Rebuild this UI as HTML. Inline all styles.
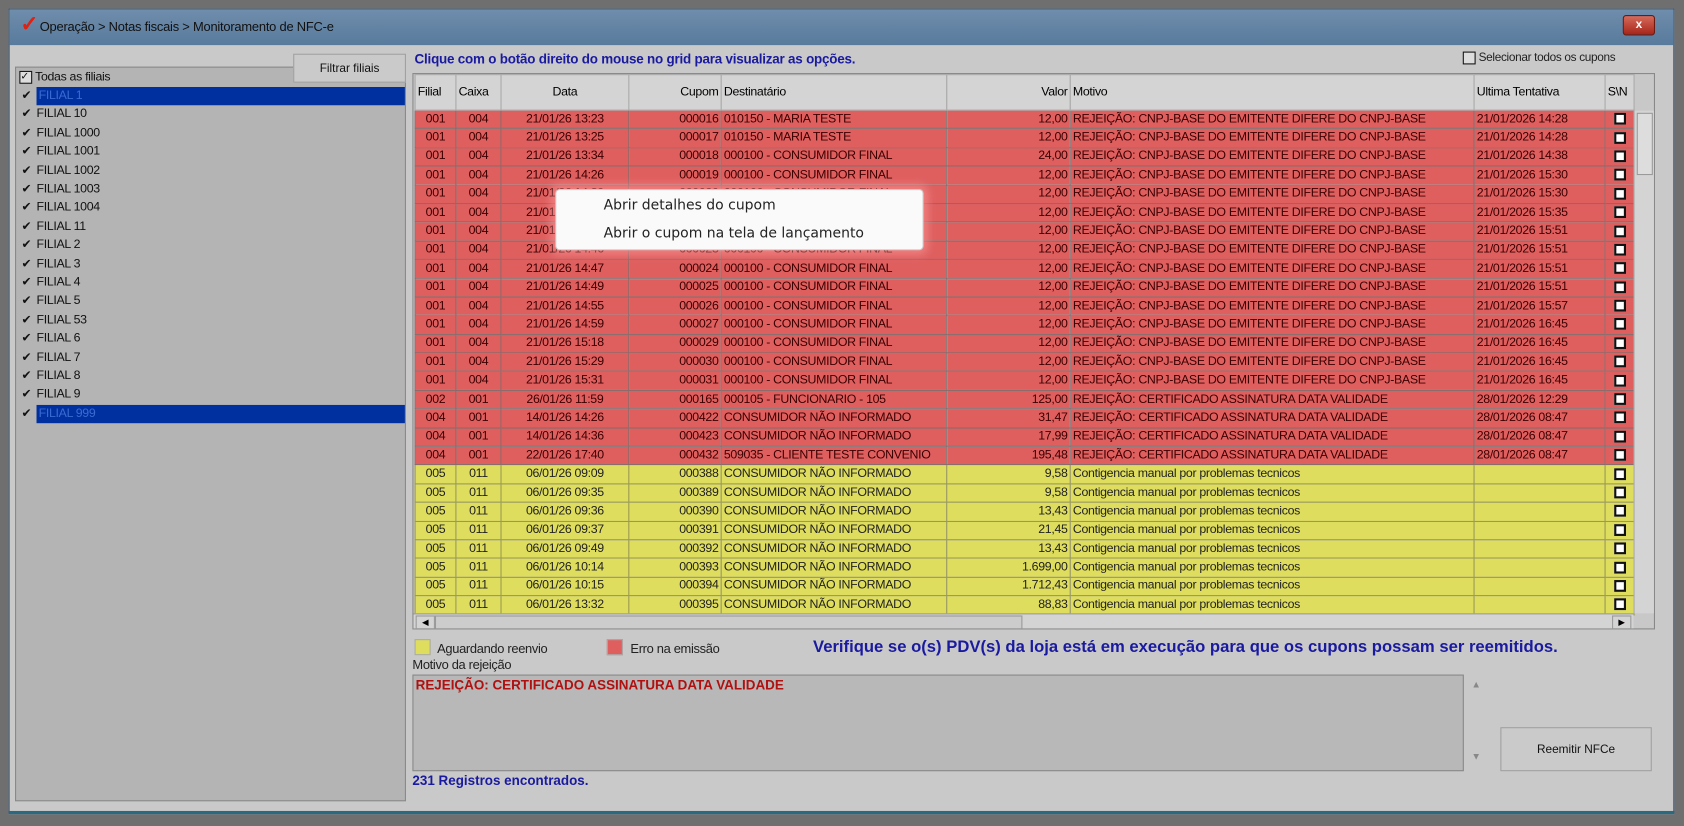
<!DOCTYPE html>
<html><head><meta charset="utf-8"><style>
*{box-sizing:border-box;margin:0;padding:0}
html,body{width:1684px;height:826px;overflow:hidden;background:#6f6f6f;font-family:"Liberation Sans",sans-serif}
#w{position:absolute;left:0;top:0;width:1568px;height:769px;transform:scale(1.07398,1.07412);transform-origin:0 0}
.abs{position:absolute}
#win{left:8px;top:8px;width:1551px;height:750px;background:#c9c9c9;border:1px solid #3a5a78;border-bottom:3px solid #2a6a80}
#tb{left:9px;top:9px;width:1549px;height:33px;background:linear-gradient(#6f8dac,#587a9c);color:#111;font-size:12px;line-height:33px;padding-left:28px;letter-spacing:-0.2px}
#close{left:1511px;top:14px;width:30px;height:19px;background:linear-gradient(#d56a5a,#a8261a);border:1px solid #6a1a10;border-radius:3px;color:#fff;font-size:11px;text-align:center;line-height:17px;font-weight:bold}
#left{left:14px;top:62px;width:364px;height:684px;background:#b4b4b4;border:1px solid #888}
.btn{background:#cacaca;border:1px solid #a0a0a0;font-size:11px;text-align:center;color:#111}
.fi{position:absolute;left:20px;font-size:11.5px;height:17px;line-height:17px;color:#111;width:357px;letter-spacing:-0.3px}
.fi b{font-weight:normal;display:inline-block;width:14px;font-size:11px}
.sel span{background:#0030a0;color:#3a6ad0;display:inline-block;width:343px;padding-left:2px}
#grid{left:384px;top:68px;width:1157px;height:518px;background:#c8c8c8;border:1px solid #888;overflow:hidden}
table{border-collapse:collapse;table-layout:fixed;font-size:11.5px;letter-spacing:-0.3px;position:absolute;left:1px;top:0}
td,th{height:17.4px;border:1px solid #8a6a6a;white-space:nowrap;overflow:hidden;padding:0 2px;font-weight:normal;line-height:15px}
th{height:33px;background:#d4d4d4;border-color:#aaa;text-align:left}
tr.r td{background:#df5f5f;color:#3a0000}
tr.y td{background:#dedd5e;color:#222;border-color:#9a9a50}
td.c{text-align:center}td.rt{text-align:right}
.cb{display:inline-block;width:11px;height:11px;border:2px solid #111;background:#fff;vertical-align:middle}
#menu{left:517px;top:176px;width:343px;height:57px;background:#fafafa;border:1px solid #ccc;border-radius:4px;box-shadow:0 0 8px 4px rgba(255,160,160,.5);font-family:"DejaVu Sans","Liberation Sans",sans-serif;font-size:13px;color:#222}
#menu div{position:absolute;left:44px}
.blue{color:#1a1aa0;font-weight:bold}
</style></head><body><div id="w">
<div id="win" class="abs"></div>
<div id="tb" class="abs"><span style="position:absolute;left:10px;top:-2px;color:#e02010;font-size:20px;font-weight:bold">✓</span>Operação &gt; Notas fiscais &gt; Monitoramento de NFC-e</div>
<div id="close" class="abs">x</div>
<div id="left" class="abs"></div>
<div class="abs btn" style="left:273px;top:50px;width:105px;height:27px;line-height:27px">Filtrar filiais</div>
<div class="fi" style="top:64px;left:18px"><b class="cb" style="width:12px;height:12px;border-width:1px;background:#ddd;font-size:10px;line-height:9px">✓</b> Todas as filiais</div>
<div id="fl"></div>
<div class="abs blue" style="left:386px;top:48px;font-size:12.5px;letter-spacing:-0.2px">Clique com o botão direito do mouse no grid para visualizar as opções.</div>
<div class="abs" style="left:1362px;top:48px;font-size:11px;color:#222;letter-spacing:-0.3px"><span class="cb" style="border-width:1px;width:12px;height:12px;background:#ddd"></span> Selecionar todos os cupons</div>
<div id="grid" class="abs"><table id="t">
<colgroup><col style="width:38px"><col style="width:42px"><col style="width:119px"><col style="width:86px"><col style="width:210px"><col style="width:115px"><col style="width:376px"><col style="width:122px"><col style="width:27px"></colgroup>
<tr><th>Filial</th><th>Caixa</th><th style="text-align:center">Data</th><th style="text-align:right">Cupom</th><th>Destinatário</th><th style="text-align:right">Valor</th><th>Motivo</th><th>Ultima Tentativa</th><th>S\N</th></tr>
</table>
<div class="abs" style="left:1136px;top:34px;width:20px;height:468px;background:#d4d4d4;border-left:1px solid #aaa"><div style="margin:2px;height:58px;border:1px solid #999;background:#ddd"></div></div>
<div class="abs" style="left:0;top:502px;width:1136px;height:16px;background:#d4d4d4;border-top:1px solid #999"><div style="position:absolute;left:2px;top:1px;width:18px;height:13px;border:1px solid #999;font-size:8px;line-height:12px;text-align:center">◀</div><div style="position:absolute;left:20px;top:1px;width:547px;height:13px;border:1px solid #999;background:#ccc"></div><div style="position:absolute;right:2px;top:1px;width:18px;height:13px;border:1px solid #999;font-size:8px;line-height:12px;text-align:center">▶</div></div>
</div>
<div id="menu" class="abs"><div style="top:7px">Abrir detalhes do cupom</div><div style="top:33px">Abrir o cupom na tela de lançamento</div></div>
<div class="abs" style="left:386px;top:595px;width:15px;height:15px;background:#dedd5e;border:1px solid #aaa"></div>
<div class="abs" style="left:407px;top:597px;font-size:12px;color:#222;letter-spacing:-0.3px">Aguardando reenvio</div>
<div class="abs" style="left:565px;top:595px;width:15px;height:15px;background:#df5f5f;border:1px solid #aaa"></div>
<div class="abs" style="left:587px;top:597px;font-size:12px;color:#222;letter-spacing:-0.3px">Erro na emissão</div>
<div class="abs blue" style="left:757px;top:594px;font-size:15.5px">Verifique se o(s) PDV(s) da loja está em execução para que os cupons possam ser reemitidos.</div>
<div class="abs" style="left:384px;top:612px;font-size:12px;color:#222;letter-spacing:-0.3px">Motivo da rejeição</div>
<div class="abs" style="left:384px;top:628px;width:979px;height:90px;background:#b8b8b8;border:1px solid #888;padding:2px 2px;color:#b01010;font-weight:bold;font-size:12.5px">REJEIÇÃO: CERTIFICADO ASSINATURA DATA VALIDADE</div>
<div class="abs" style="left:1370px;top:632px;font-size:9px;color:#888">▲</div>
<div class="abs" style="left:1370px;top:699px;font-size:9px;color:#888">▼</div>
<div class="abs btn" style="left:1397px;top:677px;width:141px;height:41px;line-height:41px">Reemitir NFCe</div>
<div class="abs blue" style="left:384px;top:720px;font-size:12.5px">231 Registros encontrados.</div>
</div>
<script>
var f=["FILIAL 1","FILIAL 10","FILIAL 1000","FILIAL 1001","FILIAL 1002","FILIAL 1003","FILIAL 1004","FILIAL 11","FILIAL 2","FILIAL 3","FILIAL 4","FILIAL 5","FILIAL 53","FILIAL 6","FILIAL 7","FILIAL 8","FILIAL 9","FILIAL 999"],h="";
f.forEach(function(n,i){var s=(i==0||i==17);h+='<div class="fi'+(s?' sel':'')+'" style="top:'+(81+i*17.4)+'px"><b>✔</b><span>'+n+'</span></div>';});
document.getElementById("fl").outerHTML=h;
var A="REJEIÇÃO: CNPJ-BASE DO EMITENTE DIFERE DO CNPJ-BASE",B="REJEIÇÃO: CERTIFICADO ASSINATURA DATA VALIDADE",C="Contigencia manual por problemas tecnicos",CF="000100 - CONSUMIDOR FINAL",CN="CONSUMIDOR NÃO INFORMADO";
var R=[
["r","001","004","21/01/26 13:23","000016","010150 - MARIA TESTE","12,00",A,"21/01/2026 14:28"],
["r","001","004","21/01/26 13:25","000017","010150 - MARIA TESTE","12,00",A,"21/01/2026 14:28"],
["r","001","004","21/01/26 13:34","000018",CF,"24,00",A,"21/01/2026 14:38"],
["r","001","004","21/01/26 14:26","000019",CF,"12,00",A,"21/01/2026 15:30"],
["r","001","004","21/01/26 14:30","000020",CF,"12,00",A,"21/01/2026 15:30"],
["r","001","004","21/01/26 14:35","000021",CF,"12,00",A,"21/01/2026 15:35"],
["r","001","004","21/01/26 14:40","000022",CF,"12,00",A,"21/01/2026 15:51"],
["r","001","004","21/01/26 14:46","000023",CF,"12,00",A,"21/01/2026 15:51"],
["r","001","004","21/01/26 14:47","000024",CF,"12,00",A,"21/01/2026 15:51"],
["r","001","004","21/01/26 14:49","000025",CF,"12,00",A,"21/01/2026 15:51"],
["r","001","004","21/01/26 14:55","000026",CF,"12,00",A,"21/01/2026 15:57"],
["r","001","004","21/01/26 14:59","000027",CF,"12,00",A,"21/01/2026 16:45"],
["r","001","004","21/01/26 15:18","000029",CF,"12,00",A,"21/01/2026 16:45"],
["r","001","004","21/01/26 15:29","000030",CF,"12,00",A,"21/01/2026 16:45"],
["r","001","004","21/01/26 15:31","000031",CF,"12,00",A,"21/01/2026 16:45"],
["r","002","001","26/01/26 11:59","000165","000105 - FUNCIONARIO - 105","125,00",B,"28/01/2026 12:29"],
["r","004","001","14/01/26 14:26","000422",CN,"31,47",B,"28/01/2026 08:47"],
["r","004","001","14/01/26 14:36","000423",CN,"17,99",B,"28/01/2026 08:47"],
["r","004","001","22/01/26 17:40","000432","509035 - CLIENTE TESTE CONVENIO","195,48",B,"28/01/2026 08:47"],
["y","005","011","06/01/26 09:09","000388",CN,"9,58",C,""],
["y","005","011","06/01/26 09:35","000389",CN,"9,58",C,""],
["y","005","011","06/01/26 09:36","000390",CN,"13,43",C,""],
["y","005","011","06/01/26 09:37","000391",CN,"21,45",C,""],
["y","005","011","06/01/26 09:49","000392",CN,"13,43",C,""],
["y","005","011","06/01/26 10:14","000393",CN,"1.699,00",C,""],
["y","005","011","06/01/26 10:15","000394",CN,"1.712,43",C,""],
["y","005","011","06/01/26 13:32","000395",CN,"88,83",C,""]];
var t=document.getElementById("t"),s="";
R.forEach(function(r){s+='<tr class="'+r[0]+'"><td class="c">'+r[1]+'</td><td class="c">'+r[2]+'</td><td class="c">'+r[3]+'</td><td class="rt">'+r[4]+'</td><td>'+r[5]+'</td><td class="rt">'+r[6]+'</td><td>'+r[7]+'</td><td>'+r[8]+'</td><td class="c"><span class="cb"></span></td></tr>';});
t.insertAdjacentHTML("beforeend",s);
</script>
</body></html>
